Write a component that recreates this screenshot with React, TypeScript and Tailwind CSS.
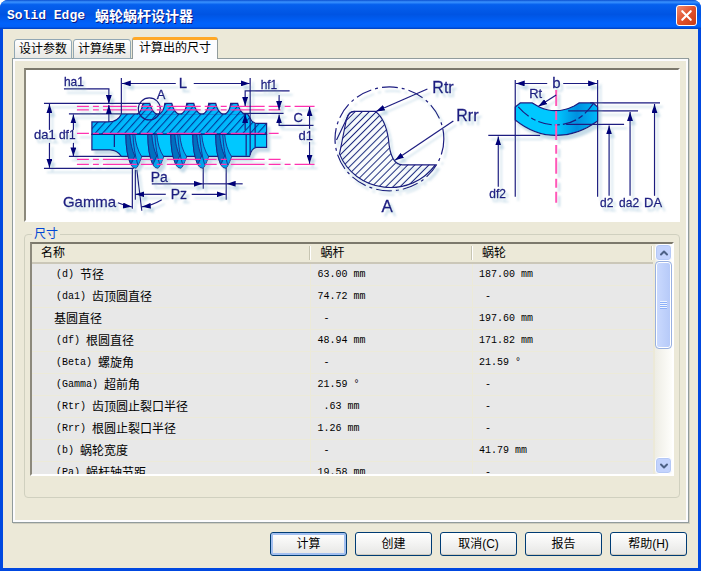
import React, { useState } from 'react';
import { ChevronDown, ChevronUp, X } from 'lucide-react';

interface DimensionRow {
  symbol?: string;
  name: string;
  worm: string;
  wheel: string;
}

const TABS = ['设计参数', '计算结果', '计算出的尺寸'];

const ROWS: DimensionRow[] = [
  { symbol: '(d)', name: '节径', worm: '63.00 mm', wheel: '187.00 mm' },
  { symbol: '(da1)', name: '齿顶圆直径', worm: '74.72 mm', wheel: ' -' },
  { name: '基圆直径', worm: ' -', wheel: '197.60 mm' },
  { symbol: '(df)', name: '根圆直径', worm: '48.94 mm', wheel: '171.82 mm' },
  { symbol: '(Beta)', name: '螺旋角', worm: ' -', wheel: '21.59 °' },
  { symbol: '(Gamma)', name: '超前角', worm: '21.59 °', wheel: ' -' },
  { symbol: '(Rtr)', name: '齿顶圆止裂口半径', worm: ' .63 mm', wheel: ' -' },
  { symbol: '(Rrr)', name: '根圆止裂口半径', worm: '1.26 mm', wheel: ' -' },
  { symbol: '(b)', name: '蜗轮宽度', worm: ' -', wheel: '41.79 mm' },
  { symbol: '(Pa)', name: '蜗杆轴节距', worm: '19.58 mm', wheel: ' -' },
];

const ACTIONS = ['计算', '创建', '取消(C)', '报告', '帮助(H)'];

// [x, baseline, size, text]
const LABELS: [number, number, number, string][] = [
  [64, 86, 12, 'ha1'],
  [34, 139, 13, 'da1'],
  [59, 139, 12, 'df1'],
  [179, 88, 15, 'L'],
  [157, 99, 13, 'A'],
  [151, 182, 14, 'Pa'],
  [171, 199, 14, 'Pz'],
  [63, 207, 15, 'Gamma'],
  [261, 89, 12, 'hf1'],
  [294, 122, 13, 'C'],
  [299, 140, 13, 'd1'],
  [433, 93, 16, 'Rtr'],
  [457, 121, 16, 'Rrr'],
  [382, 212, 17, 'A'],
  [553, 88, 15, 'b'],
  [530, 98, 13, 'Rt'],
  [490, 198, 12, 'df2'],
  [601, 207, 12, 'd2'],
  [620, 207, 12, 'da2'],
  [645, 207, 13, 'DA'],
];

// Every path ends in an arrow head
const ARROWS = [
  'M64 89H109V104',
  'M109 122V105',
  'M49.5 130V104',
  'M49.5 143V168',
  'M73.5 130V114.5',
  'M73.5 143V156.5',
  'M176 83.5H122',
  'M194 83.5H250',
  'M290 91H245.5V106',
  'M245.5 130V114',
  'M279.5 95V110',
  'M314 125.5H279.5V114.5',
  'M310 129V107',
  'M310 142V164',
  'M152 184H203',
  'M243 184H227',
  'M166 194.5H135.5',
  'M192 194.5H226',
  'M118 203Q125 206 132 207',
  'M162 200Q152 206 142 207',
  'M428 89L376.5 111.5',
  'M454 121L395.5 160.5',
  'M548 83.5H516.5',
  'M564 83.5H598',
  'M557 95L539 106.5',
  'M499 187V136.5',
  'M610 196V125.5',
  'M631 196V112',
  'M655.5 196V104',
];

const LINES = [
  'M44 103.5H142',
  'M44 168.5H134',
  'M69 114H121',
  'M69 156.5H121',
  'M121.5 78V114',
  'M250.5 78V134',
  'M243 113.5H284',
  'M203.5 168V189',
  'M226.5 168V200',
  'M203 184H227',
  'M135.5 170V200',
  'M132.5 168V209',
  'M137 170L142 211',
  'M516 80V197',
  'M598.5 80V197',
  'M489 135.5H541',
  'M567 124.5H625',
  'M569 111H639',
  'M591 103H661',
];

const PITCH_LINES = ['M77 106.5H315', 'M77 110H285', 'M77 133.5H279', 'M77 159.5H285', 'M77 164.5H315'];

const TEETH = [147, 169, 191, 213, 235];
const THREADS = [135, 157, 180, 202, 225];

const GearDiagram: React.FC = () => (
  <svg
    viewBox="26 70 653 150"
    preserveAspectRatio="xMinYMin meet"
    className="block h-[150px] w-full font-['Liberation_Sans',Arial,sans-serif]"
    role="img"
  >
    <defs>
      <marker id="arrow" markerUnits="userSpaceOnUse" markerWidth="9" markerHeight="6" refX="9" refY="3" orient="auto">
        <path d="M0 0L9 3L0 6Z" fill="#000078" />
      </marker>
      <pattern id="hatch" width="5" height="5" patternUnits="userSpaceOnUse" patternTransform="rotate(45)">
        <path d="M.5 0V5" stroke="#1a2080" strokeWidth="1" />
      </pattern>
      <pattern id="cutHatch" width="5.5" height="5.5" patternUnits="userSpaceOnUse" patternTransform="rotate(42)">
        <rect width="5.5" height="5.5" fill="#00b8fc" />
        <path d="M.5 0V5.5" stroke="#003a98" strokeWidth="1.2" />
      </pattern>
      <linearGradient id="wheel">
        <stop offset="0.5" stopColor="#00c8ff" />
        <stop offset="0.75" stopColor="#0090e0" />
        <stop offset="1" stopColor="#00b8f8" />
      </linearGradient>
      <filter id="shadow" filterUnits="userSpaceOnUse" x="26" y="70" width="653" height="150">
        <feDropShadow dx="3" dy="4" stdDeviation="0.8" floodColor="#8db8d0" floodOpacity="0.5" />
      </filter>
    </defs>

    <g filter="url(#shadow)" fill="none" stroke="#1c1c80" strokeWidth="1.2">
      {/* worm body: cut half above the axis, plain half below */}
      <path
        d="M92 134.5V122H108Q118 122 121.5 114H248L252 121L256 123.5H267V134.5Z"
        fill="url(#cutHatch)"
      />
      <path d="M92 134.5V150H110Q117 150 121.5 156.5H250Q252 148 257 147.5H267V134.5Z" fill="#00c8ff" />
      {TEETH.map((x) => (
        <path
          key={x}
          d={`M${x - 10} 114.5Q${x - 5} 112 ${x - 4} 103.5H${x + 3}Q${x + 5} 112 ${x + 10} 114.5`}
          fill="url(#cutHatch)"
        />
      ))}
      {THREADS.map((x) => (
        <g key={x} strokeWidth="0.8">
          <path
            d={`M${x - 9} 134.5Q${x - 9} 154 ${x - 4} 165Q${x - 2} 168.5 ${x + 1} 168.5Q${x + 3} 168 ${x + 7} 157Q${x + 1} 148 ${x} 134.5Z`}
            fill="#00a4ec"
          />
          <path
            d={`M${x - 9} 134.5Q${x - 9} 154 ${x - 4} 165L${x} 156Q${x - 4} 148 ${x - 5} 134.5Z`}
            fill="#0070c0"
          />
          <path d={`M${x - 2} 134.5Q${x - 1} 152 ${x + 3} 165`} />
        </g>
      ))}
      <path d="M92 134.5H267M114.5 134.5V147M246.5 134.5V156M250.5 134.5V155M255.5 123.5V147" />
      <circle cx="149.5" cy="109" r="11" />

      {PITCH_LINES.map((d) => (
        <path key={d} d={d} stroke="#ff30b0" strokeDasharray="12 4 6 4 34 4" />
      ))}

      {/* tooth profile detail */}
      <path
        d="M340 154L347 119Q349 111.5 355 111.5H376Q386 119 389 139Q391 165 403 165H436A54.5 52 0 0 1 340 154Z"
        fill="url(#hatch)"
      />
      <path d="M337 140L349 115Q351 111.5 355 111.5" />
      <ellipse cx="390" cy="139" rx="54.5" ry="52" strokeDasharray="16 4 3 4" />

      {/* worm wheel section */}
      <path
        d="M516 107L521 103H533L540 107Q557 115 575 106L580 103H594L598.5 107V121Q579 135.5 557 135.5T516 120Z"
        fill="url(#wheel)"
      />
      <path d="M519 107Q535 125 557 125T594 104" strokeDasharray="14 3 5 3" />
      <path d="M557 90V203" stroke="#ff58b8" strokeWidth="2" strokeDasharray="16 5 9 4" />

      {LINES.map((d) => (
        <path key={d} d={d} />
      ))}
      {ARROWS.map((d) => (
        <path key={d} d={d} markerEnd="url(#arrow)" />
      ))}

      {LABELS.map(([x, y, size, text]) => (
        <text key={`${x}-${y}`} x={x} y={y} fontSize={size} fill="#1c1c80" strokeWidth="0.3">
          {text}
        </text>
      ))}
    </g>
  </svg>
);

const ScrollBar: React.FC = () => (
  <div className="flex w-[17px] shrink-0 flex-col bg-gradient-to-r from-[#eeede5] to-[#fefefb]">
    <button
      aria-label="Scroll up"
      className="flex h-[17px] shrink-0 items-center justify-center rounded-sm border border-white bg-[#c3d3fd] text-[#4d6185] shadow-[inset_0_0_0_1px_#b4c8f6]"
    >
      <ChevronUp size={12} strokeWidth={4} />
    </button>
    <div className="flex h-[88px] shrink-0 flex-col items-center justify-center gap-px rounded-sm border border-[#98b0e0] bg-gradient-to-r from-[#cbdafe] to-[#b5c9f8] shadow-[inset_0_0_0_1px_#fff]">
      {[0, 1, 2, 3].map((i) => (
        <span key={i} className="h-px w-[7px] bg-[#8cb0f8] shadow-[0_-1px_0_#eef4fe]" />
      ))}
    </div>
    <button
      aria-label="Scroll down"
      className="mt-auto flex h-[17px] shrink-0 items-center justify-center rounded-sm border border-white bg-[#c3d3fd] text-[#4d6185] shadow-[inset_0_0_0_1px_#b4c8f6]"
    >
      <ChevronDown size={12} strokeWidth={4} />
    </button>
  </div>
);

const HeaderCell: React.FC<{ label: string }> = ({ label }) => (
  <th scope="col" className="h-5 border-b-2 border-[#cbc7b8] p-0 text-left font-normal">
    <div className="flex h-[14px] items-center border-r border-white pl-[9px] shadow-[inset_-1px_0_0_#c7c5b2]">{label}</div>
  </th>
);

export default function App() {
  const [activeTab, setActiveTab] = useState(2);

  return (
    <div className="flex h-screen flex-col overflow-hidden rounded-t-lg bg-[#0048e0] font-['Liberation_Sans','Noto_Sans_CJK_SC',sans-serif] text-xs text-black">
      <header className="flex h-[29px] shrink-0 items-center justify-between bg-[linear-gradient(#0a4fd0_0%,#3a93ff_7%,#0560ee_16%,#0054e3_50%,#0062fb_80%,#0060f8_92%,#0040c0_100%)] pl-[7px] pr-1 pt-[2px]">
        <h1 className="flex items-center gap-[10px] whitespace-nowrap font-bold leading-5 text-white [text-shadow:1px_1px_#0a1883]">
          <span className="font-['Liberation_Mono',monospace] text-[13px]">Solid Edge</span>
          <span className="text-sm leading-5">蜗轮蜗杆设计器</span>
        </h1>
        <button
          aria-label="关闭"
          className="flex size-[21px] items-center justify-center rounded-[3px] border border-white bg-gradient-to-br from-[#f08a6c] via-[#e0512c] to-[#c83c14] text-white"
        >
          <X size={17} strokeWidth={3} />
        </button>
      </header>

      <main className="mx-[3px] mb-[3px] flex min-h-0 flex-1 flex-col bg-[#ece9d8] px-[9px] pb-3 pt-2">
        <div role="tablist" className="relative z-10 -mb-px flex h-[22px] shrink-0 items-end pl-[2px]">
          {TABS.map((tab, i) => (
            <button
              key={tab}
              role="tab"
              aria-selected={activeTab === i}
              onClick={() => setActiveTab(i)}
              className={
                activeTab === i
                  ? 'h-[22px] rounded-t-[3px] border-x border-t-[3px] border-x-[#919b9c] border-t-[#ffa826] bg-[#fcfcfe] px-[6px] pb-1 leading-4'
                  : 'mr-px h-[20px] rounded-t-[3px] border border-[#91a7b4] bg-gradient-to-b from-white to-[#e8e8e4] px-1 leading-4'
              }
            >
              {tab}
            </button>
          ))}
        </div>

        <section className="flex min-h-0 flex-1 flex-col border border-[#919b9c] bg-[#ece9d8] pb-6 pl-[9px] pr-[6px] pt-[7px] shadow-[inset_0_0_0_2px_#fcfcfe,1px_1px_0_#d0cebf]">
          <div className="mx-[2px] mt-[2px] shrink-0 border-2 border-b-white border-l-[#8c897c] border-r-white border-t-[#7c796c] bg-white">
            <GearDiagram />
          </div>

          <fieldset className="mx-[2px] mt-1 flex min-h-0 flex-1 flex-col rounded-[4px] border border-[#d0d0bf] px-[5px] pb-[21px]">
            <legend className="ml-[2px] px-[2px] leading-4 text-[#0046d5]">尺寸</legend>
            <div className="flex min-h-0 flex-1 overflow-hidden border-2 border-b-white border-l-[#8c897c] border-r-white border-t-[#7c796c] bg-white">
              <div className="min-w-0 flex-1 overflow-hidden bg-[#ece9d8] pr-[2px]">
                <table className="w-full table-fixed border-separate border-spacing-0">
                  <colgroup>
                    <col className="w-[45%]" />
                    <col className="w-[26%]" />
                    <col />
                  </colgroup>
                  <thead>
                    <tr>
                      <HeaderCell label="名称" />
                      <HeaderCell label="蜗杆" />
                      <HeaderCell label="蜗轮" />
                    </tr>
                  </thead>
                  <tbody className="bg-[#e8e8e8]">
                    {ROWS.map((row) => (
                      <tr key={row.name}>
                        <td className="h-[22px] border-b border-r border-[#ecead9] p-0 pl-[22px] leading-4">
                          <div className="flex items-center gap-[6px]">
                            {row.symbol && <span className="pl-[2px] font-['Liberation_Mono',monospace] text-[10px]">{row.symbol}</span>}
                            <span>{row.name}</span>
                          </div>
                        </td>
                        <td className="whitespace-pre border-b border-r border-[#ecead9] p-0 pl-[6px] font-['Liberation_Mono',monospace] text-[10px] leading-4">
                          {row.worm}
                        </td>
                        <td className="whitespace-pre border-b border-[#ecead9] p-0 pl-[6px] font-['Liberation_Mono',monospace] text-[10px] leading-4">
                          {row.wheel}
                        </td>
                      </tr>
                    ))}
                  </tbody>
                </table>
              </div>
              <ScrollBar />
            </div>
          </fieldset>
        </section>

        <footer className="mt-[9px] flex shrink-0 justify-end gap-2 pr-[2px]">
          {ACTIONS.map((action, i) => (
            <button
              key={action}
              className={
                i === 0
                  ? 'h-6 w-[77px] rounded-[3px] border border-[#003c74] bg-gradient-to-b from-white to-[#e6e6e4] leading-4 shadow-[inset_0_0_0_2px_#a2bff0]'
                  : 'h-6 w-[77px] rounded-[3px] border border-[#003c74] bg-gradient-to-b from-white to-[#e6e6e4] leading-4 shadow-[inset_0_-1px_0_#d0ccc0]'
              }
            >
              {action}
            </button>
          ))}
        </footer>
      </main>
    </div>
  );
}
